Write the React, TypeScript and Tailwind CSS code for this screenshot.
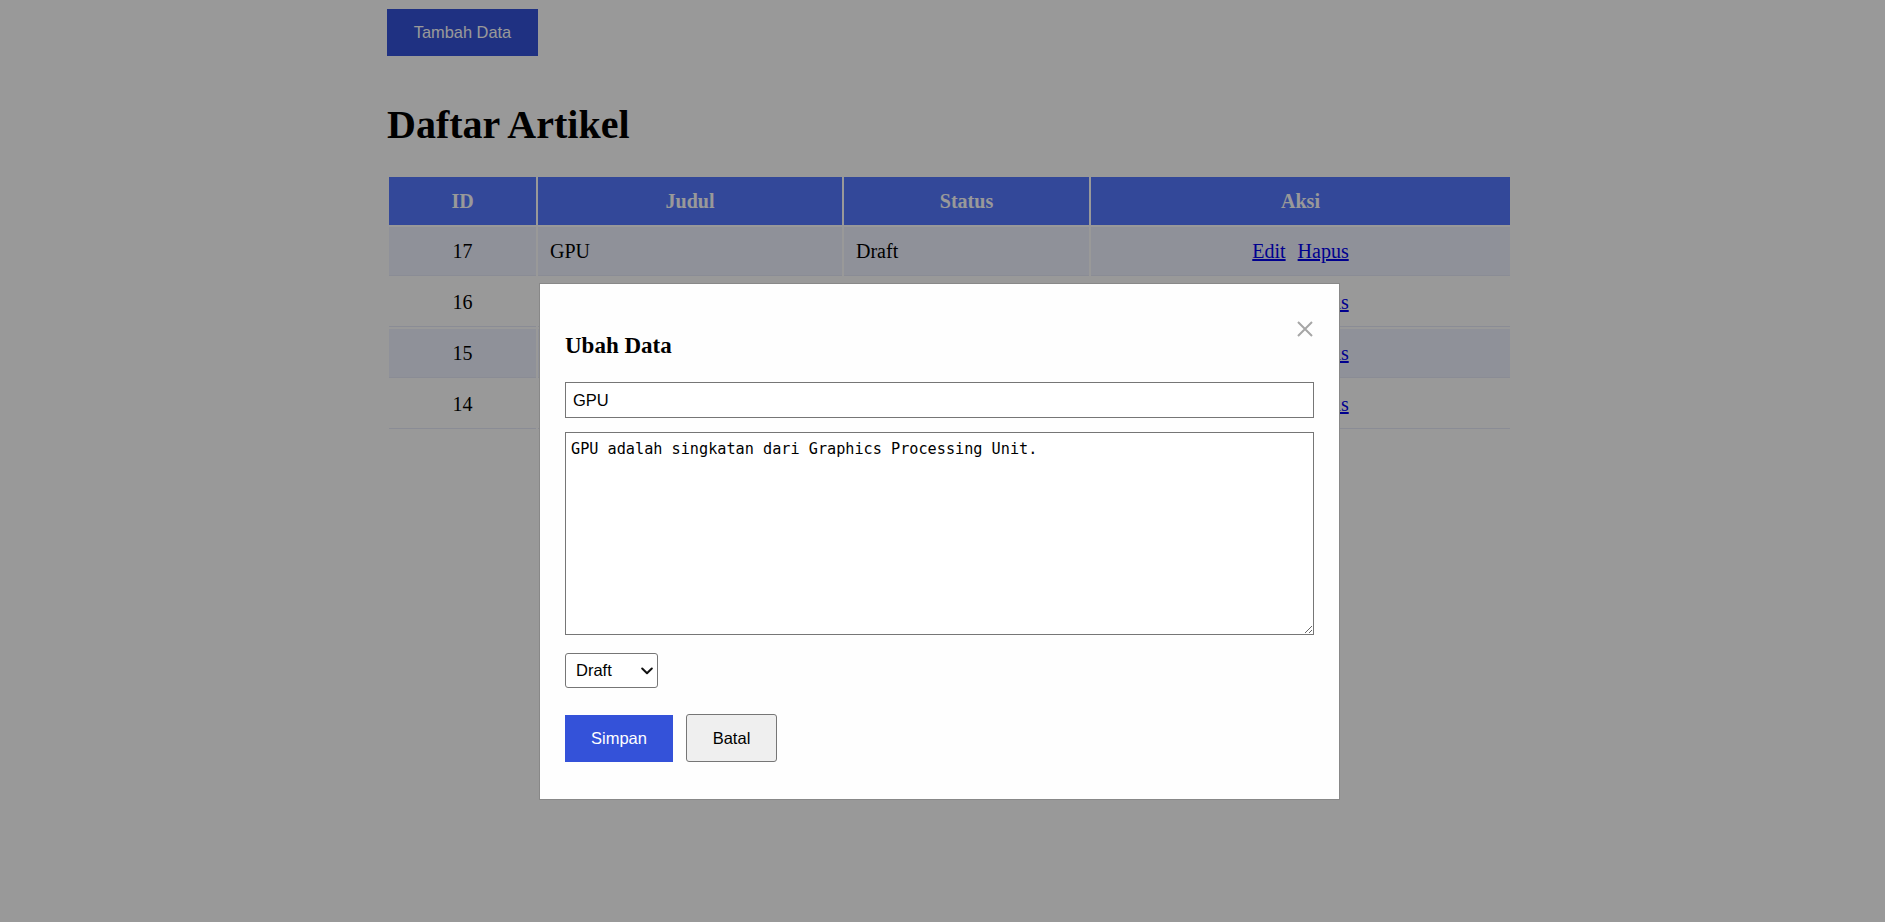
import React from "react";

type Artikel = {
    id: number;
    judul: string;
    status: string;
};

const daftar: Artikel[] = [
    { id: 17, judul: "GPU", status: "Draft" },
    { id: 16, judul: "CPU", status: "Publish" },
    { id: 15, judul: "RAM", status: "Publish" },
    { id: 14, judul: "SSD", status: "Draft" },
];

const sans = "font-['Liberation_Sans',Arial,sans-serif]";

const EditModal: React.FC = () => {
    return (
        <div className="fixed inset-0 bg-black/40">
            <div className="ml-[539px] mt-[283px] w-[801px] border border-[#888] bg-[#fefefe] px-[25px] pt-[25px] pb-[37px]">
                <div className="flex items-start justify-between">
                    <h3 className="mt-[23px] h-[27px] text-[23px] font-bold leading-[27px]">Ubah Data</h3>
                    <button className="mt-[12px] mr-[1px] block" aria-label="Tutup">
                        <svg width="16" height="16" viewBox="0 0 16 16" fill="none">
                            <path d="M1 1L15 15M15 1L1 15" stroke="#a6a6a6" strokeWidth="2" />
                        </svg>
                    </button>
                </div>

                <input
                    defaultValue="GPU"
                    className={`mt-[23px] block h-[36px] w-full border border-[#767676] bg-white px-[7px] text-[16.5px] text-black outline-none ${sans}`}
                />

                <textarea
                    defaultValue="GPU adalah singkatan dari Graphics Processing Unit."
                    className="mt-[14px] block h-[203px] w-full border border-[#767676] bg-white px-[5px] py-[6px] font-['DejaVu_Sans_Mono',monospace] text-[15.2px] leading-[20px] text-black outline-none"
                />

                <div className="relative mt-[18px] h-[35px] w-[93px]">
                    <select
                        defaultValue="Draft"
                        className={`h-full w-full appearance-none rounded-[3px] border border-[#767676] bg-white pl-[10px] text-[16.5px] text-black outline-none ${sans}`}
                    >
                        <option>Draft</option>
                        <option>Publish</option>
                    </select>
                    <svg
                        className="pointer-events-none absolute right-[5px] top-[14px]"
                        width="12"
                        height="8"
                        viewBox="0 0 12 8"
                        fill="none"
                    >
                        <path d="M1.2 1.5L6 6.2L10.8 1.5" stroke="#111" strokeWidth="2" strokeLinecap="round" strokeLinejoin="round" />
                    </svg>
                </div>

                <div className="mt-[26px] flex items-center gap-[13px]">
                    <button className={`h-[47px] w-[108px] bg-[#3452d9] text-[16.5px] text-white ${sans}`}>Simpan</button>
                    <button className={`h-[48px] w-[91px] rounded-[3px] border border-[#767676] bg-[#efefef] text-[16.5px] text-black ${sans}`}>
                        Batal
                    </button>
                </div>
            </div>
        </div>
    );
};

export default function App() {
    return (
        <div className="relative min-h-screen bg-white font-['Liberation_Serif','Times_New_Roman',serif] text-[20px] text-black">
            <div className="ml-[387px] w-[1125px] pt-[9px]">
                <button className={`block h-[47px] w-[151px] bg-[#3452d9] text-[16.4px] text-white ${sans}`}>Tambah Data</button>

                <h1 className="mt-[46px] mb-[27px] h-[46px] text-[40px] font-bold leading-[46px]">Daftar Artikel</h1>

                <table className="w-full table-fixed border-separate border-spacing-[2px]">
                    <thead>
                        <tr>
                            <th className="w-[147px] bg-[#5578ff] py-[12px] text-center font-bold leading-[24px] text-white">ID</th>
                            <th className="w-[304px] bg-[#5578ff] py-[12px] text-center font-bold leading-[24px] text-white">Judul</th>
                            <th className="w-[245px] bg-[#5578ff] py-[12px] text-center font-bold leading-[24px] text-white">Status</th>
                            <th className="w-[419px] bg-[#5578ff] py-[12px] text-center font-bold leading-[24px] text-white">Aksi</th>
                        </tr>
                    </thead>
                    <tbody>
                        {daftar.map((item, i) => (
                            <tr key={item.id} className={i % 2 === 0 ? "bg-[#eef2ff]" : ""}>
                                <td className="border-b border-[#e6eaf8] px-[12px] py-[12px] text-center leading-[24px]">{item.id}</td>
                                <td className="border-b border-[#e6eaf8] px-[12px] py-[12px] leading-[24px]">{item.judul}</td>
                                <td className="border-b border-[#e6eaf8] px-[12px] py-[12px] leading-[24px]">{item.status}</td>
                                <td className="border-b border-[#e6eaf8] px-[12px] py-[12px] text-center leading-[24px]">
                                    <a href="#" className="text-[#0000ee] underline">Edit</a>{" "}
                                    <a href="#" className="ml-[7px] text-[#0000ee] underline">Hapus</a>
                                </td>
                            </tr>
                        ))}
                    </tbody>
                </table>
            </div>

            <EditModal />
        </div>
    );
}
